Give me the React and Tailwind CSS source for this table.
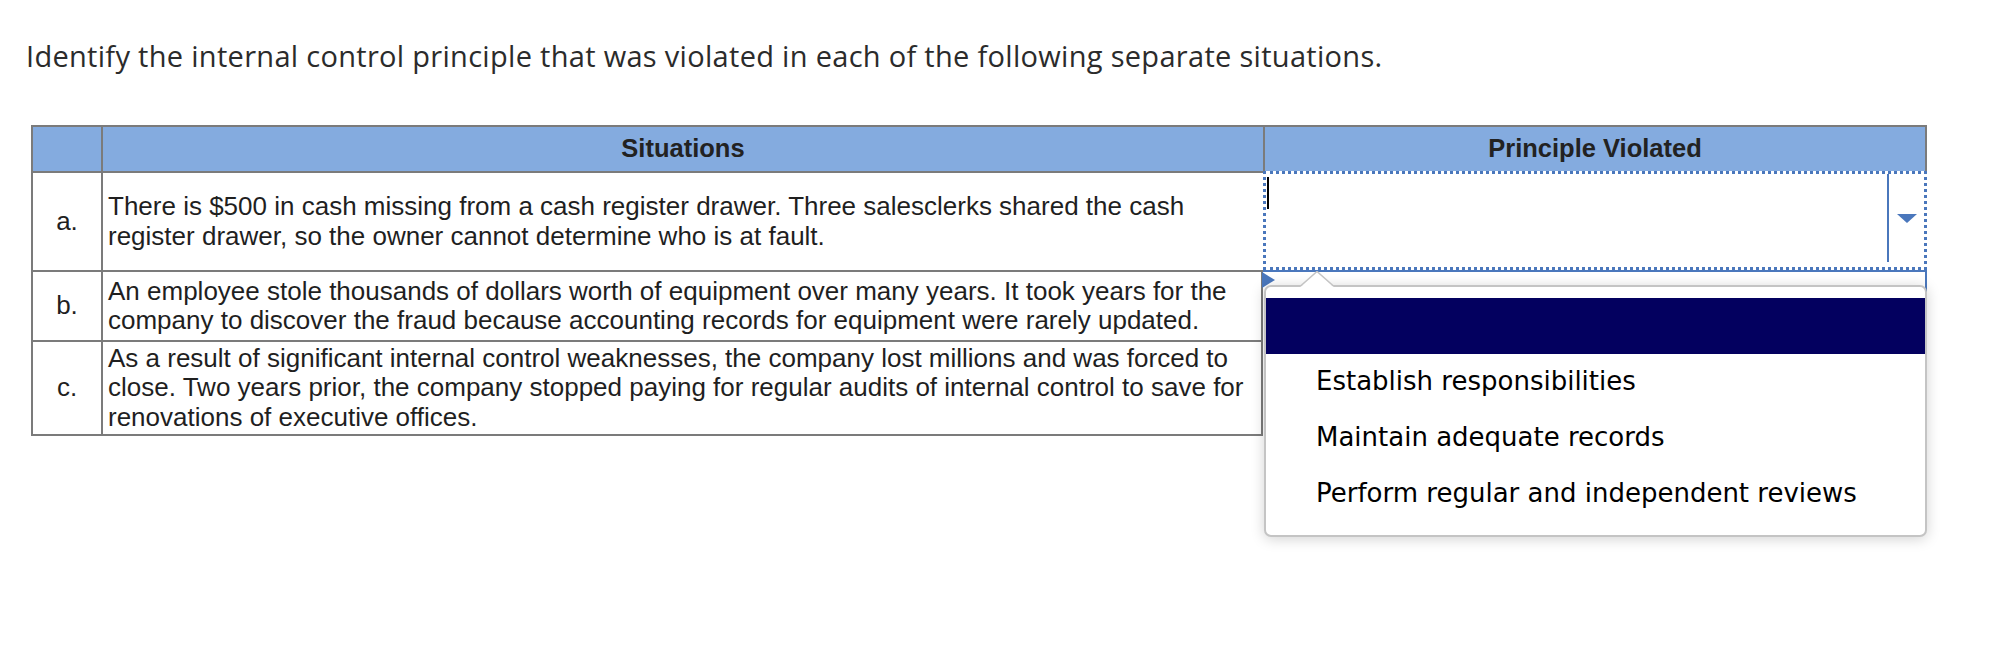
const rows = [
  {
    label: 'a.',
    text: 'There is $500 in cash missing from a cash register drawer. Three salesclerks shared the cash register drawer, so the owner cannot determine who is at fault.',
  },
  {
    label: 'b.',
    text: 'An employee stole thousands of dollars worth of equipment over many years. It took years for the company to discover the fraud because accounting records for equipment were rarely updated.',
  },
  {
    label: 'c.',
    text: 'As a result of significant internal control weaknesses, the company lost millions and was forced to close. Two years prior, the company stopped paying for regular audits of internal control to save for renovations of executive offices.',
  },
];

const options = ['', 'Establish responsibilities', 'Maintain adequate records', 'Perform regular and independent reviews'];

function LabelCell({ children, last }) {
  return (
    <div
      className={`flex w-[70px] shrink-0 items-center justify-center border-l-2 border-t-2 border-[#7b7b7b] ${last ? 'border-b-2' : ''}`}
    >
      {children}
    </div>
  );
}

function TextCell({ children, last, rightBorder }) {
  return (
    <div
      className={`flex w-[1162px] shrink-0 items-center border-l-2 border-t-2 border-[#7b7b7b] pl-[5px] pr-[4px] ${last ? 'border-b-2' : ''} ${rightBorder ? 'border-r-2' : ''}`}
    >
      <p>{children}</p>
    </div>
  );
}

function Dropdown() {
  return (
    <div className="flex h-[99px] w-[664px] shrink-0 border-[3px] border-dotted border-[#4a77bc] bg-white">
      <div className="flex-1">
        <div className="ml-[1px] mt-[3px] h-[32px] w-[2px] bg-black"></div>
      </div>
      <div className="mb-[5px] flex w-[37px] items-center justify-center border-l-2 border-[#4a77bc]">
        <svg width="20" height="9" viewBox="0 0 20 9">
          <polygon points="0,0 20,0 10,9" fill="#4a77bc" />
        </svg>
      </div>
    </div>
  );
}

export default function App() {
  return (
    <div className="min-h-[652px] w-[2010px] bg-white pl-[26px] pt-[38px] font-['Liberation_Sans',Arial,sans-serif] text-[26px] leading-[29.5px] text-[#1f1f1f]">
      <h1 className="font-['Open_Sans',sans-serif] text-[29px] leading-[36px] tracking-[0.3px] text-[#2b2b2b]">
        Identify the internal control principle that was violated in each of the following separate situations.
      </h1>

      <div className="relative ml-[5px] mt-[51px] w-[1896px]">
        {/* header */}
        <div className="flex h-[46px] bg-[#84abdf] text-[25.5px] font-bold text-[#222]">
          <div className="w-[70px] shrink-0 border-l-2 border-t-2 border-[#7b7b7b]"></div>
          <div className="flex w-[1162px] shrink-0 items-center justify-center border-l-2 border-t-2 border-[#7b7b7b]">
            Situations
          </div>
          <div className="flex w-[664px] shrink-0 items-center justify-center border-x-2 border-t-2 border-[#7b7b7b]">
            Principle Violated
          </div>
        </div>

        {/* row a */}
        <div className="flex h-[99px]">
          <LabelCell>{rows[0].label}</LabelCell>
          <TextCell>{rows[0].text}</TextCell>
          <Dropdown />
        </div>

        {/* row b */}
        <div className="flex h-[70px]">
          <LabelCell>{rows[1].label}</LabelCell>
          <TextCell rightBorder>{rows[1].text}</TextCell>
          <div className="w-[664px] shrink-0 border-r-2 border-t-2 border-[#4a77bc]"></div>
        </div>

        {/* row c */}
        <div className="flex h-[96px]">
          <LabelCell last>{rows[2].label}</LabelCell>
          <TextCell last rightBorder>{rows[2].text}</TextCell>
          <div className="w-[664px] shrink-0"></div>
        </div>

        {/* marker on row b select */}
        <svg className="absolute left-[1231px] top-[147px]" width="13" height="16" viewBox="0 0 13 16">
          <polygon points="0,0 13,8 0,16" fill="#4a77bc" />
        </svg>

        {/* options popup */}
        <div className="absolute left-[1233px] top-[160px] h-[252px] w-[663px] rounded-[7px] border-2 border-[#c4c4c4] bg-white py-[11px] font-['DejaVu_Sans',Verdana,sans-serif] text-[26px] text-black shadow-[0_2px_14px_rgba(0,0,0,0.18)]">
          {options.map((opt, i) => (
            <div
              key={i}
              className={`flex h-[56px] items-center pl-[50px] ${i === 0 ? 'bg-[#03005f]' : ''}`}
            >
              {opt}
            </div>
          ))}
        </div>
        <svg className="absolute left-[1269px] top-[146px]" width="34" height="17" viewBox="0 0 34 17">
          <rect x="0" y="15" width="34" height="2" fill="#ffffff" />
          <polygon points="1,15.5 17,0.5 33,15.5" fill="#ffffff" />
          <polyline points="0,15.5 17,0.5 34,15.5" fill="none" stroke="#c4c4c4" strokeWidth="1.5" />
        </svg>
      </div>
    </div>
  );
}
